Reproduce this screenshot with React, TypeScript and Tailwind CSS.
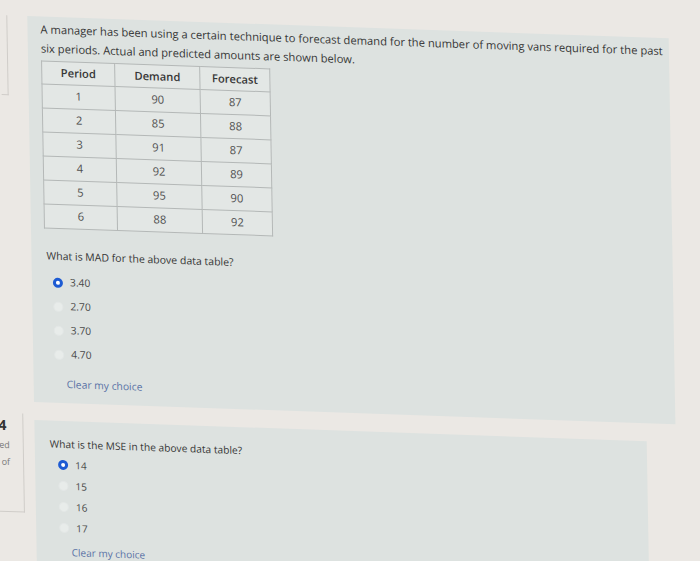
import React from 'react';

const rows = [
  [1, 90, 87],
  [2, 85, 88],
  [3, 91, 87],
  [4, 92, 89],
  [5, 95, 90],
  [6, 88, 92],
];

function Radio({ checked }: { checked?: boolean }) {
  if (checked) {
    return <span className="h-[10px] w-[10px] shrink-0 rounded-full border-[3px] border-[#1d5bd3] bg-white" />;
  }
  return <span className="h-[10px] w-[10px] shrink-0 rounded-full border border-[#e3e7e6] bg-[#e8ecea]" />;
}

function Options({ items, gap, size }: { items: string[]; gap: string; size: string }) {
  return (
    <div className={`ml-[8px] flex flex-col ${gap}`}>
      {items.map((item, i) => (
        <label key={item} className={`flex h-[18px] items-center gap-[7px] text-[#4a4a4a] ${size}`}>
          <Radio checked={i === 0} />
          {item}
        </label>
      ))}
    </div>
  );
}

export default function App() {
  return (
    <div className="h-[561px] w-[700px] overflow-hidden bg-[#ebe8e4] font-['Open_Sans',sans-serif] text-[#363636]">
      <div className="flex origin-top-left skew-x-1 skew-y-2 flex-col gap-[10px] pt-[15px]">
        <div className="flex items-start">
          <div className="h-[80px] w-[7px] shrink-0 border-b border-r border-[#d0cdc9]" />
          <section className="ml-[20px] h-[386px] w-[641px] shrink-0 bg-[#dde2e0] pl-[13px] pt-[3px]">
            <p className="text-[11.2px] leading-[19px]">
              A manager has been using a certain technique to forecast demand for the number of moving vans required for the past six periods. Actual and predicted amounts are shown below.
            </p>
            <table className="mt-[3px] border-collapse bg-[#e3e7e5] text-center text-[11.2px]">
              <thead>
                <tr className="h-[23px]">
                  <th className="w-[73px] border border-[#b4b8b7] font-semibold">Period</th>
                  <th className="w-[85px] border border-[#b4b8b7] font-semibold">Demand</th>
                  <th className="w-[70px] border border-[#b4b8b7] font-semibold">Forecast</th>
                </tr>
              </thead>
              <tbody>
                {rows.map(([p, d, f]) => (
                  <tr key={p} className="h-[24px]">
                    <td className="border border-[#b4b8b7] text-[#505050]">{p}</td>
                    <td className="border border-[#b4b8b7] text-[#505050]">{d}</td>
                    <td className="border border-[#b4b8b7] text-[#505050]">{f}</td>
                  </tr>
                ))}
              </tbody>
            </table>
            <p className="mt-[18px] ml-[2px] text-[10.5px] leading-[18px]">What is MAD for the above data table?</p>
            <div className="mt-[9px]">
              <Options items={['3.40', '2.70', '3.70', '4.70']} gap="gap-[6px]" size="text-[10.3px]" />
            </div>
            <p className="mt-[11px] ml-[20px] text-[10.3px] leading-[18px] text-[#5a72a6]">Clear my choice</p>
          </section>
        </div>
        <div className="flex items-start">
          <div className="-ml-[15px] mt-[2px] flex h-[99px] w-[31px] shrink-0 flex-col items-end border-b border-r border-[#d0cdc9] pr-[13px] pt-[3px] text-right">
            <span className="mr-[3px] text-[14px] font-bold leading-[18px] text-[#333]">4</span>
            <span className="mt-[2px] text-[9px] leading-[17px] text-[#777]">ed</span>
            <span className="text-[9px] leading-[17px] text-[#777]">of</span>
          </div>
          <section className="ml-[11px] mt-[8px] h-[200px] w-[612px] shrink-0 bg-[#dde2e0] pl-[15px] pt-[14px]">
            <p className="text-[10.2px] leading-[18px]">What is the MSE in the above data table?</p>
            <div className="mt-[3px]">
              <Options items={['14', '15', '16', '17']} gap="gap-[3px]" size="text-[10px]" />
            </div>
            <p className="mt-[6px] ml-[20px] text-[10px] leading-[18px] text-[#5a72a6]">Clear my choice</p>
          </section>
        </div>
      </div>
    </div>
  );
}
